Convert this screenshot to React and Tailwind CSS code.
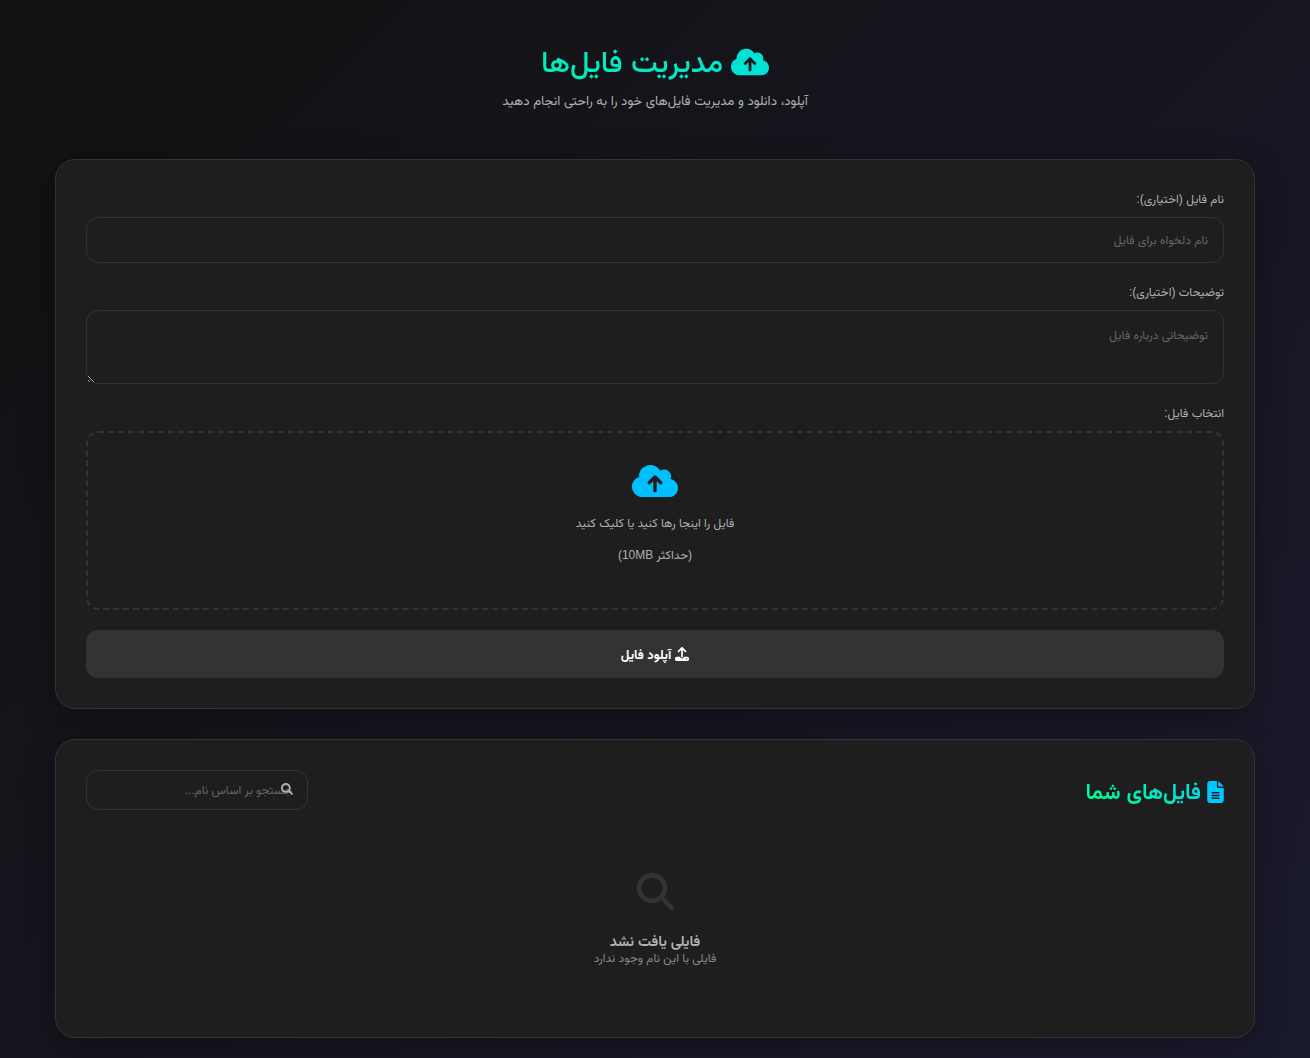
import React from 'react';
import { FaSearch } from 'react-icons/fa';
import { FaCloudArrowUp, FaFileLines, FaMagnifyingGlass, FaUpload } from 'react-icons/fa6';

const font = { fontFamily: '"Liberation Sans", Vazirmatn, sans-serif' };

export default function App() {
  return (
    <div dir="rtl" style={font} className="min-h-[1058px] bg-[linear-gradient(135deg,#111111_0%,#1a1a2e_100%)] px-[55px] pt-5 pb-5 text-[#e0e0e0]">
      {/* Header */}
      <header className="pt-[20px] pb-[46px] text-center">
        <h1 className="flex items-center justify-center gap-[8px] bg-[linear-gradient(45deg,#00ff88,#00d4ff)] bg-clip-text text-[30px] font-medium leading-[44px] text-transparent">
          <FaCloudArrowUp className="text-[38px] text-[#00e2d6]" />
          <span>مدیریت فایل‌ها</span>
        </h1>
        <p className="mt-[5px] text-[13.2px] leading-[24px] text-[#b0b0b0]">آپلود، دانلود و مدیریت فایل‌های خود را به راحتی انجام دهید</p>
      </header>

      {/* Upload form */}
      <section className="mb-[30px] rounded-[20px] border border-[#333] bg-[#1e1e1e] p-[30px] shadow-[0_8px_32px_rgba(0,0,0,0.3)]">
        <div className="mb-5">
          <label className="mb-2 block text-[12px] leading-[19px] text-[#b0b0b0]">نام فایل (اختیاری):</label>
          <input placeholder="نام دلخواه برای فایل" style={font} className="block h-[46px] w-full rounded-xl border border-[#333] bg-[#1e1e1e] px-[15px] text-[12px] outline-none placeholder:text-[#666]" />
        </div>
        <div className="mb-5">
          <label className="mb-2 block text-[12px] leading-[19px] text-[#b0b0b0]">توضیحات (اختیاری):</label>
          <textarea placeholder="توضیحاتی درباره فایل" style={font} className="block h-[74px] w-full rounded-xl border border-[#333] bg-[#1e1e1e] p-[15px] text-[12px] outline-none placeholder:text-[#666]" />
        </div>
        <div className="mb-5">
          <label className="mb-2 block text-[12px] leading-[19px] text-[#b0b0b0]">انتخاب فایل:</label>
          <div className="flex h-[179px] flex-col items-center rounded-xl border-2 border-dashed border-[#333] pt-[25px] text-[#b0b0b0]">
            <FaCloudArrowUp className="text-[46px] text-[#00bfff]" />
            <p className="mt-[10px] text-[12px] leading-[18px]">فایل را اینجا رها کنید یا کلیک کنید</p>
            <p className="mt-[14px] text-[12px] leading-[18px]">(حداکثر 10MB)</p>
          </div>
        </div>
        <button style={font} className="flex h-[48px] w-full items-center justify-center gap-1 rounded-xl bg-[#333] text-[13px] font-bold text-white">
          <FaUpload className="text-[14px]" />
          <span className="mt-px">آپلود فایل</span>
        </button>
      </section>

      {/* Files list */}
      <section className="rounded-[20px] border border-[#333] bg-[#1e1e1e] p-[30px] shadow-[0_8px_32px_rgba(0,0,0,0.3)]">
        <div className="flex items-center justify-between">
          <h2 className="flex h-10 items-center gap-[6px] bg-[linear-gradient(45deg,#00ff88,#00d4ff)] bg-clip-text pt-[3px] text-[21.4px] font-bold leading-[36px] text-transparent">
            <FaFileLines className="h-[22px] w-[17px] text-[#00c8ff]" />
            <span>فایل‌های شما</span>
          </h2>
          <div className="relative w-[222px]">
            <input placeholder="جستجو بر اساس نام..." style={font} className="block h-[40px] w-full rounded-xl border border-[#333] bg-[#1e1e1e] px-[15px] text-[12px] outline-none placeholder:text-[#666]" />
            <FaSearch className="absolute right-[15px] top-[13px] text-[12px] text-[#b0b0b0]" />
          </div>
        </div>
        <div className="flex h-[197px] flex-col items-center pt-[63px]">
          <FaMagnifyingGlass className="text-[37px] text-[#333]" />
          <h3 className="mt-[21px] text-[14.4px] font-bold leading-[20px] text-[#b0b0b0]">فایلی یافت نشد</h3>
          <p className="text-[12px] leading-[14px] text-[#888]">فایلی با این نام وجود ندارد</p>
        </div>
      </section>
    </div>
  );
}
